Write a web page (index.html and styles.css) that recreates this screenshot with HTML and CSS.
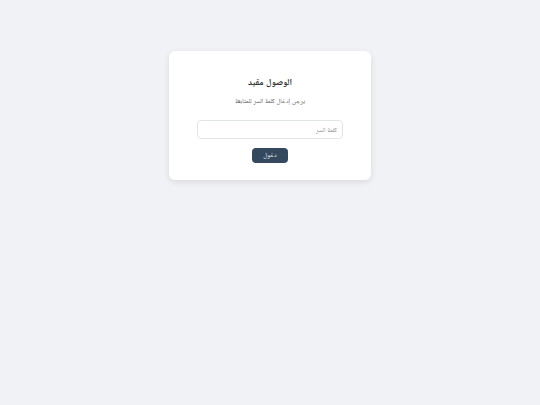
FILE: index.html
```html
<!DOCTYPE html>
<html lang="ar" dir="rtl">
<head>
<meta charset="utf-8">
<title>الوصول مقيد</title>
<link rel="stylesheet" href="styles.css">
</head>
<body>
<main class="card">
  <h1 class="title">الوصول مقيد</h1>
  <p class="subtitle">يرجى إدخال كلمة السر للمتابعة</p>
  <form class="form">
    <input class="field" type="password" placeholder="كلمة السر">
    <button class="btn" type="button">دخول</button>
  </form>
</main>
</body>
</html>
```
FILE: styles.css
```css
html, body {
  margin: 0;
  padding: 0;
}
body {
  background: #f0f2f5;
  font-family: "Liberation Sans", "Noto Naskh Arabic", sans-serif;
  min-height: 405px;
  padding-top: 51px;
  box-sizing: border-box;
}
.card {
  width: 202px;
  margin: 0 auto;
  background: #ffffff;
  border-radius: 6px;
  box-shadow: 0 2px 6px rgba(0, 0, 0, 0.1);
  box-sizing: border-box;
  padding: 25px 28px 17px;
  text-align: center;
}
.title {
  margin: 0;
  font-size: 9px;
  font-weight: bold;
  color: #2f2f2f;
  line-height: 12px;
}
.subtitle {
  margin: 8px 0 0;
  font-size: 6.4px;
  color: #555555;
  line-height: 10px;
}
.form {
  display: flex;
  flex-direction: column;
  align-items: center;
  margin-top: 14px;
}
.field {
  width: 100%;
  height: 19px;
  box-sizing: border-box;
  border: 1px solid #e2e5e8;
  border-radius: 4px;
  padding: 0 5px;
  font-family: inherit;
  font-size: 6.4px;
  color: #333;
  background: #fff;
  direction: rtl;
  outline: none;
}
.field::placeholder {
  color: #888;
}
.btn {
  margin-top: 9px;
  width: 36px;
  height: 15px;
  border: none;
  border-radius: 4px;
  background: #34495e;
  color: #fff;
  font-family: inherit;
  font-size: 6.4px;
  padding: 0;
  cursor: pointer;
}
```
